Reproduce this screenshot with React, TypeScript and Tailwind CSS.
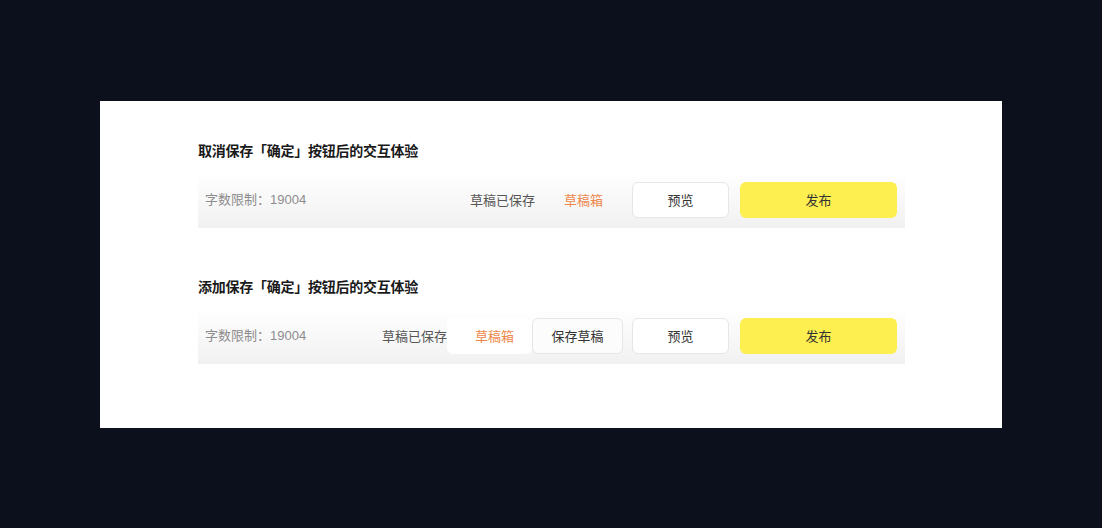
import React from "react";

const font = { fontFamily: '"Noto Sans CJK SC", "Noto Sans", sans-serif' };
const countFont = { fontFamily: '"Liberation Sans", "Noto Sans CJK SC", sans-serif' };

function Bar({ second }: { second?: boolean }) {
  return (
    <div className="flex h-[56px] w-[707px] items-center bg-gradient-to-b from-white to-[#f1f1f1] pl-[7px] pr-[8px]">
      <span className="text-[13px] text-[#8c8c8c]" style={countFont}>字数限制：19004</span>
      <div className="ml-auto flex items-center">
        {second ? (
          <>
            <span className="text-[13px] text-[#555555]">草稿已保存</span>
            <div className="flex h-[36px] w-[85px] items-center rounded-[6px] bg-white pl-[28px] text-[13px] text-[#f0874a]">
              草稿箱
            </div>
            <div className="flex h-[36px] w-[91px] items-center justify-center rounded-[6px] border border-[#e6e6e6] bg-[#fcfcfc] text-[13px] text-[#333333]">
              保存草稿
            </div>
            <div className="ml-[9px] flex h-[36px] w-[97px] items-center justify-center rounded-[6px] border border-[#e6e6e6] bg-white text-[13px] text-[#333333]">
              预览
            </div>
          </>
        ) : (
          <>
            <span className="text-[13px] text-[#555555]">草稿已保存</span>
            <span className="ml-[29px] text-[13px] text-[#f0874a]">草稿箱</span>
            <div className="ml-[29px] flex h-[36px] w-[97px] items-center justify-center rounded-[6px] border border-[#e6e6e6] bg-white text-[13px] text-[#333333]">
              预览
            </div>
          </>
        )}
        <div className="ml-[11px] flex h-[36px] w-[157px] items-center justify-center rounded-[6px] bg-[#fdef4f] text-[13px] text-[#333333]">
          发布
        </div>
      </div>
    </div>
  );
}

export default function App() {
  return (
    <div className="h-[528px] w-full bg-[#0b101c] px-[100px] pt-[101px]" style={font}>
      <div className="h-[327px] w-[902px] bg-white pl-[98px] pt-[39px]">
        <div className="h-[20px] text-[14px] font-bold leading-[20px] tracking-[-0.25px] text-[#1a1a1a]">取消保存「确定」按钮后的交互体验</div>
        <div className="mt-[12px]">
          <Bar />
        </div>
        <div className="mt-[48px] h-[20px] text-[14px] font-bold leading-[20px] tracking-[-0.25px] text-[#1a1a1a]">添加保存「确定」按钮后的交互体验</div>
        <div className="mt-[12px]">
          <Bar second />
        </div>
      </div>
    </div>
  );
}
